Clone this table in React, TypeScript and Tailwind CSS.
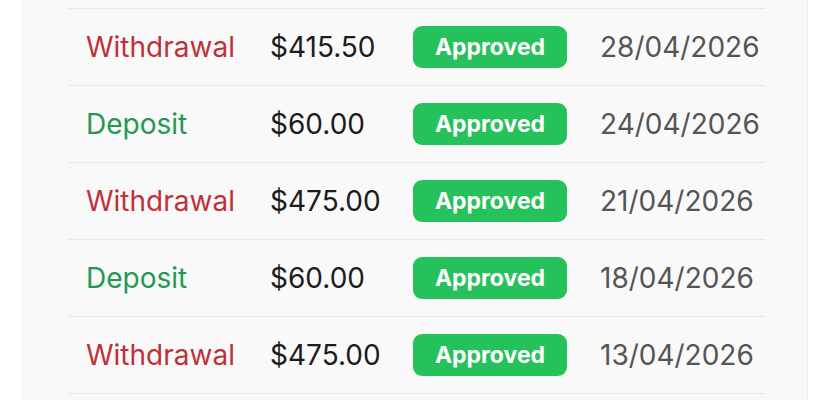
import React from "react";

interface Transaction {
  id: number;
  type: "Withdrawal" | "Deposit";
  amount: string;
  status: string;
  date: string;
}

const transactions: Transaction[] = [
  { id: 1, type: "Withdrawal", amount: "$415.50", status: "Approved", date: "28/04/2026" },
  { id: 2, type: "Deposit", amount: "$60.00", status: "Approved", date: "24/04/2026" },
  { id: 3, type: "Withdrawal", amount: "$475.00", status: "Approved", date: "21/04/2026" },
  { id: 4, type: "Deposit", amount: "$60.00", status: "Approved", date: "18/04/2026" },
  { id: 5, type: "Withdrawal", amount: "$475.00", status: "Approved", date: "13/04/2026" },
];

export default function App() {
  return (
    <div
      className="w-[816px] h-[400px] bg-white overflow-hidden"
      style={{ fontFamily: "Inter, 'Noto Sans', sans-serif" }}
    >
      <div className="ml-[22px] w-[786px] h-[400px] bg-[#f9f9f9] border-x border-[#f0f0f0]">
        {/* Liste des transactions */}
        <div className="ml-[45px] w-[697px] pt-[8px]">
          <div className="border-t border-[#e9e9e9]" />
          {transactions.map((t) => (
            <div
              key={t.id}
              className="h-[77px] flex items-center pl-[18px] border-b border-[#e9e9e9]"
            >
              <span
                className={`w-[184px] text-[28px] ${
                  t.type === "Withdrawal" ? "text-[#bf3139]" : "text-[#239853]"
                }`}
              >
                {t.type}
              </span>
              <span className="w-[143px] text-[28px] text-[#1c1c1c]">{t.amount}</span>
              <span className="w-[154px] h-[42px] rounded-[9px] bg-[#25c25c] text-white font-bold text-[23px] flex items-center justify-center">
                {t.status}
              </span>
              <span className="ml-[33px] text-[28px] text-[#555555]">{t.date}</span>
            </div>
          ))}
        </div>
      </div>
    </div>
  );
}
